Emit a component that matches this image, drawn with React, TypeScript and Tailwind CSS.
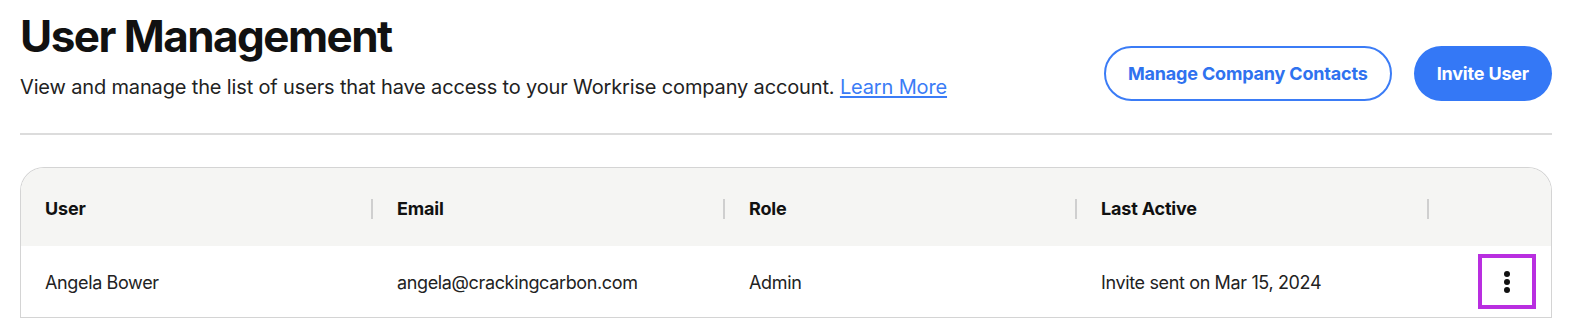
import React from 'react';

interface UserRow {
  name: string;
  email: string;
  role: string;
  lastActive: string;
}

const USERS: UserRow[] = [
  { name: 'Angela Bower', email: 'angela@crackingcarbon.com', role: 'Admin', lastActive: 'Invite sent on Mar 15, 2024' }
];

const COLUMNS = ['User', 'Email', 'Role', 'Last Active', ''];

const KebabIcon = () => (
  <svg width="8" height="24" viewBox="0 0 8 24" fill="#111">
    <circle cx="4" cy="4" r="3" />
    <circle cx="4" cy="12" r="3" />
    <circle cx="4" cy="20" r="3" />
  </svg>
);

export default function App() {
  return (
    <div className="bg-white min-h-[326px] pl-5 pr-[18px] pt-[9px] text-[#1a1a1a]" style={{ fontFamily: 'Inter, "Liberation Sans", sans-serif' }}>
      <div className="flex items-start justify-between pb-[32px] border-b-2 border-[#dcdcdc]">
        <div>
          <h1 className="text-[44px] leading-[54px] font-bold tracking-[-0.035em] text-[#111]">User Management</h1>
          <p className="mt-[10px] text-[20px] leading-[28px] tracking-[-0.15px] text-[#222]">
            View and manage the list of users that have access to your Workrise company account.{' '}
            <a href="#" className="text-[#3b7cf6] underline underline-offset-2">Learn More</a>
          </p>
        </div>
        <div className="flex items-center gap-[22px] pt-[37px]">
          <button className="h-[55px] px-[22px] rounded-full border-2 border-[#3b7cf6] text-[#2f72ef] text-[18px] font-bold tracking-[-0.01em]">
            Manage Company Contacts
          </button>
          <button className="h-[55px] px-[23px] rounded-full bg-[#3478f6] text-white text-[18px] font-bold tracking-[-0.01em]">
            Invite User
          </button>
        </div>
      </div>

      <div className="mt-[32px] rounded-t-[24px] border border-b-0 border-[#d4d4d4] overflow-hidden">
        <table className="w-full border-collapse text-left table-fixed">
          <colgroup>
            <col className="w-[352px]" />
            <col className="w-[352px]" />
            <col className="w-[352px]" />
            <col className="w-[352px]" />
            <col />
          </colgroup>
          <thead>
            <tr className="bg-[#f5f5f3] h-[78px]">
              {COLUMNS.map((col, idx) => (
                <th key={idx} className="relative px-6 pt-[2px] text-[18px] font-bold tracking-[-0.01em] text-[#111]">
                  {col}
                  {idx < 4 && (
                    <span className="absolute right-0 top-1/2 -translate-y-[8px] w-[2px] h-[20px] bg-[#cfcfcf]" />
                  )}
                </th>
              ))}
            </tr>
          </thead>
          <tbody>
            {USERS.map((u, idx) => (
              <tr key={idx} className="h-[71px] border-b border-[#d4d4d4] text-[18px] text-[#222] tracking-[-0.02em]">
                <td className="px-6 pt-[3px]">{u.name}</td>
                <td className="px-6 pt-[3px]">{u.email}</td>
                <td className="px-6 pt-[3px]">{u.role}</td>
                <td className="px-6 pt-[3px]">{u.lastActive}</td>
                <td className="pr-[15px] pt-[1px]">
                  <div className="flex justify-end">
                    <button className="w-[58px] h-[55px] flex items-center justify-center border-4 border-[#b92ee0]">
                      <KebabIcon />
                    </button>
                  </div>
                </td>
              </tr>
            ))}
          </tbody>
        </table>
      </div>
    </div>
  );
}
